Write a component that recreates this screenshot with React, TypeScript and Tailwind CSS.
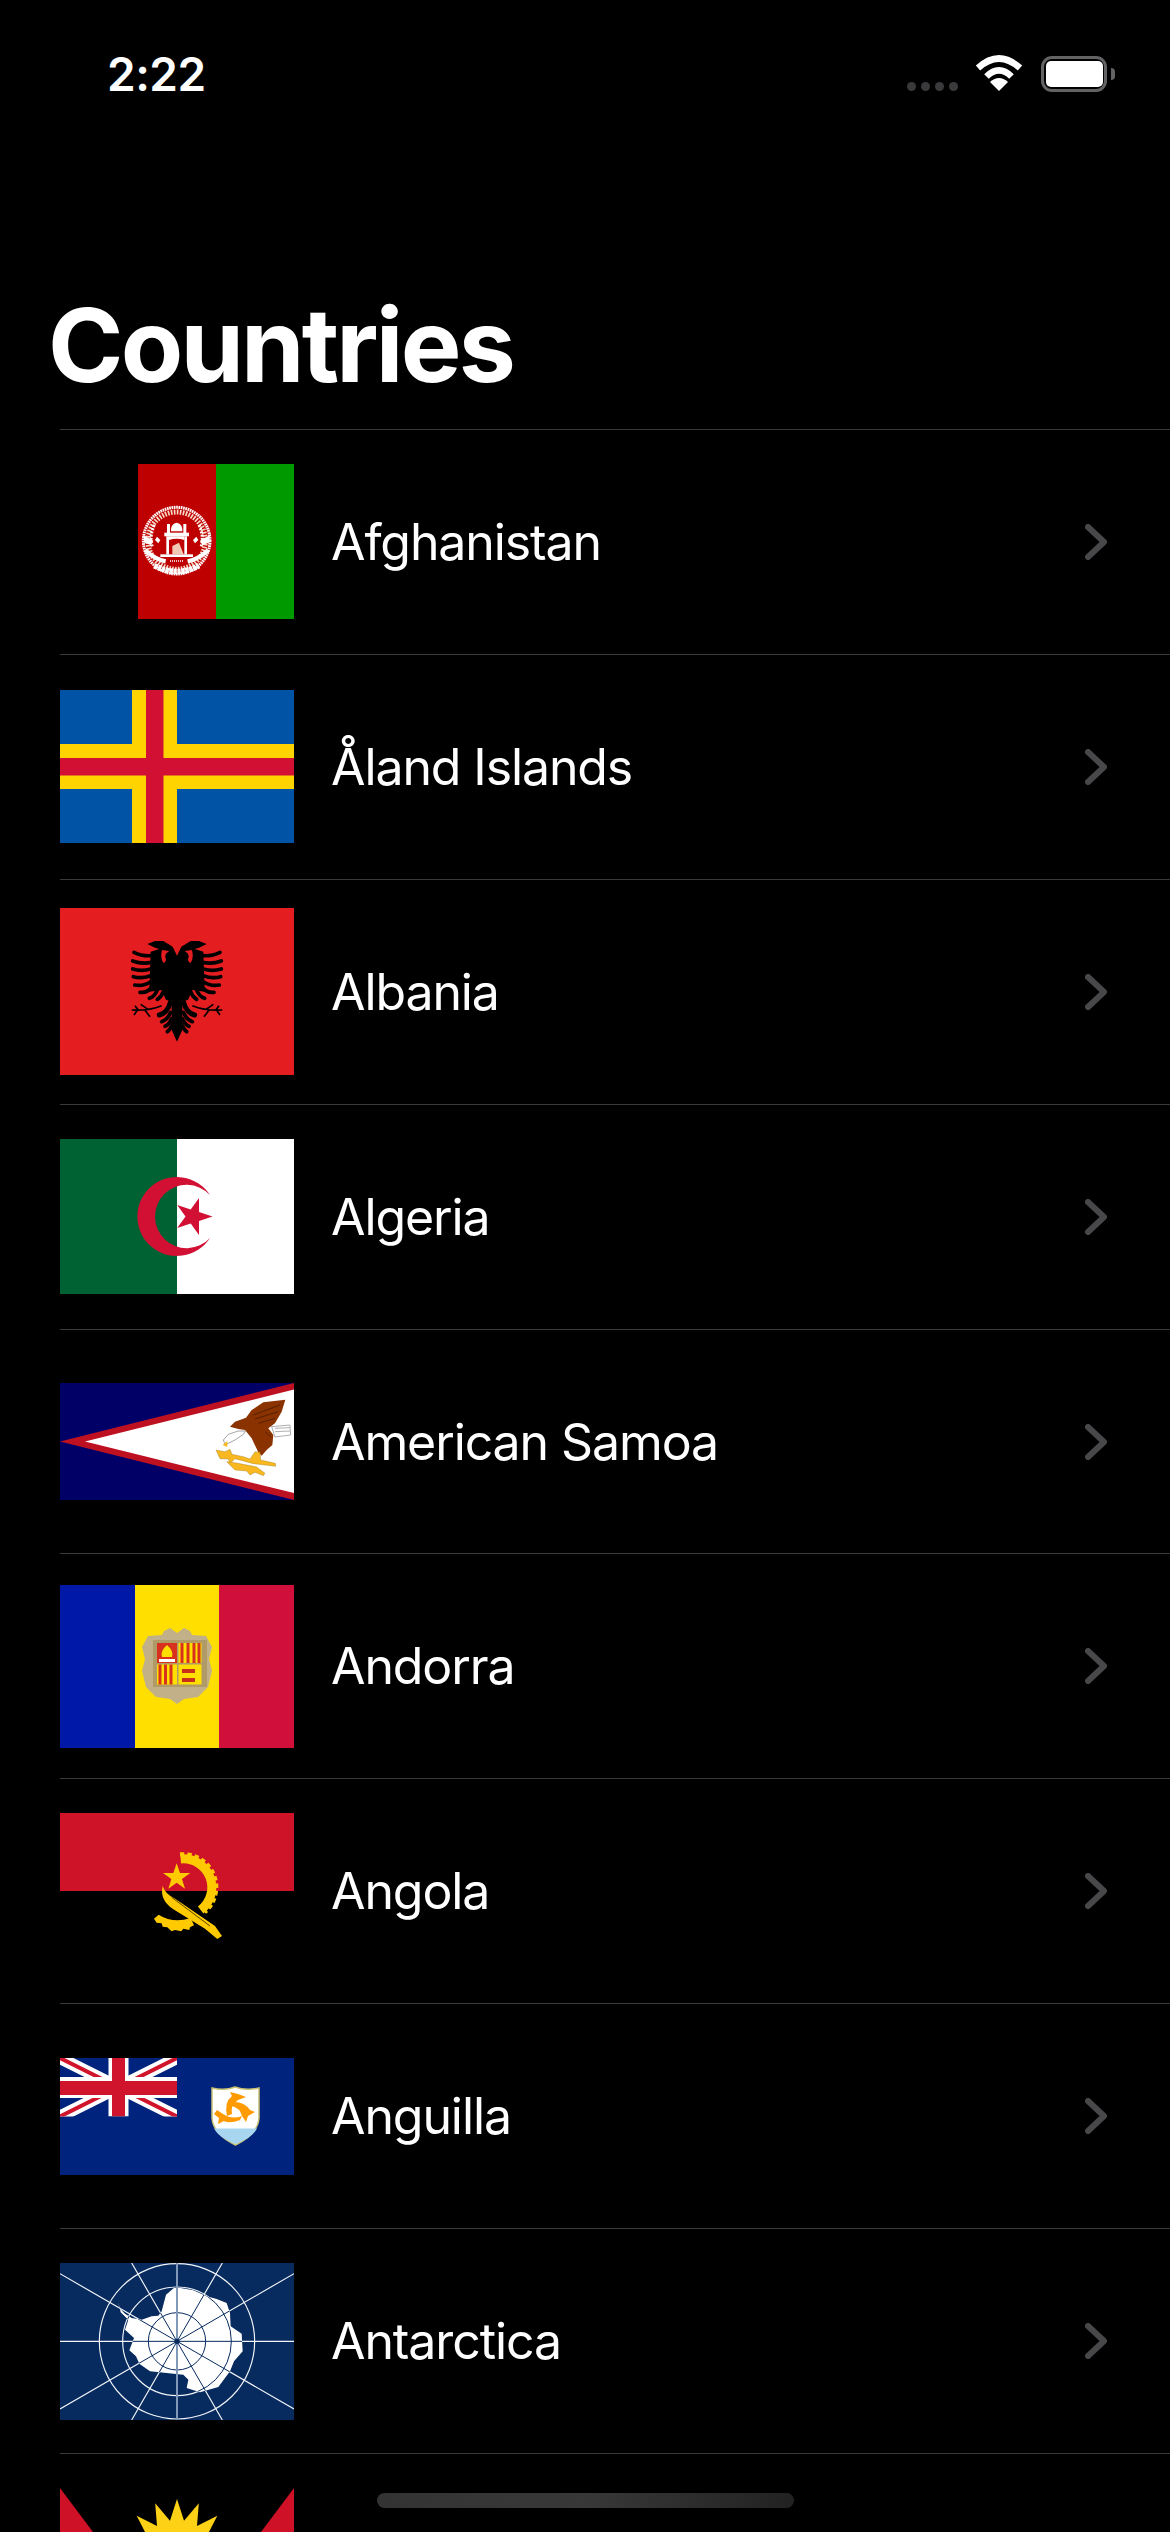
import React from 'react';

const Afghanistan = () => (
  <svg width="156" height="155" viewBox="0 0 156 155" className="block">
    <rect width="78" height="155" fill="#bf0000" />
    <rect x="78" width="78" height="155" fill="#009900" />
    <g transform="translate(-3 36) scale(.3333)">
      <circle cx="125" cy="122" r="100" fill="none" stroke="#fff" strokeWidth="9" strokeDasharray="5 2" />
      <circle cx="125" cy="122" r="86" fill="none" stroke="#f7d9c8" strokeWidth="15" strokeDasharray="5 4" />
      <path d="M58 75 Q42 110 52 140 M192 75 Q208 110 198 140" fill="none" stroke="#fff" strokeWidth="9" strokeDasharray="6 4" />
      <path d="M25 105 L55 122 L48 135 L28 128Z M225 105 L195 122 L202 135 L222 128Z" fill="#fff" />
      <path d="M30 150 Q60 178 92 184 M220 150 Q190 178 158 184" fill="none" stroke="#fff" strokeWidth="13" />
      <path d="M58 197 Q125 232 192 197" fill="none" stroke="#fff" strokeWidth="17" strokeDasharray="10 2" />
      <path d="M125 68 C138 70 143 82 142 94 L108 94 C107 82 112 70 125 68Z" fill="#fff" />
      <rect x="96" y="72" width="9" height="28" fill="#fff" />
      <rect x="145" y="72" width="9" height="28" fill="#fff" />
      <rect x="88" y="98" width="74" height="11" fill="#fff" />
      <rect x="94" y="109" width="8" height="54" fill="#fff" />
      <rect x="148" y="109" width="8" height="54" fill="#fff" />
      <path d="M102 109 H148 V120 Q125 112 102 120Z" fill="#fff" />
      <path d="M112 163 L112 138 L132 128 L146 163Z" fill="#f2c9b4" />
      <rect x="76" y="163" width="98" height="8" fill="#fff" />
      <path d="M105 183 H145" stroke="#fff" strokeWidth="5" strokeDasharray="3 3" />
      <path d="M66 110 L76 120 L70 130 L60 120Z M184 110 L174 120 L180 130 L190 120Z" fill="#fff" />
    </g>
  </svg>
);

const Aland = () => (
  <svg width="234" height="153" viewBox="0 0 234 153" className="block">
    <rect width="234" height="153" fill="#0053a5" />
    <rect x="72" width="45" height="153" fill="#ffd300" />
    <rect y="54" width="234" height="45" fill="#ffd300" />
    <rect x="86" width="17.5" height="153" fill="#d21034" />
    <rect y="68" width="234" height="17.5" fill="#d21034" />
  </svg>
);

const eagleHalf = (
  <g>
    <path d="M141 62 L128 35 L100 18 L75 18 L52 27 L75 38 L88 42 L62 50 L60 110 L58 170 L95 165 L108 195 L125 198 L125 285 L141 320 L141 62Z" fill="#000" />
    <path d="M96 45 Q90 68 100 84 Q112 80 106 66 Q104 56 118 48Z" fill="#e41e20" />
    <g fill="none" stroke="#000" strokeWidth="11" strokeLinecap="round">
      <path d="M65 62 Q35 64 12 52" />
      <path d="M65 82 Q35 88 8 78" />
      <path d="M62 102 Q35 110 8 102" />
      <path d="M62 122 Q35 132 10 125" />
      <path d="M62 140 Q40 155 14 150" />
      <path d="M66 155 Q52 175 30 172" />
      <path d="M84 160 Q75 185 58 190" />
      <path d="M100 170 Q95 185 82 193" />
      <path d="M122 200 Q112 235 88 240" strokeWidth="15" />
      <path d="M122 232 Q112 255 95 260" />
      <path d="M124 252 Q116 270 105 274" />
      <path d="M126 270 Q120 285 112 290" />
    </g>
    <path d="M95 212 Q55 228 5 225 M55 224 L32 208 M45 226 L60 245 M25 226 L15 212 M22 226 L12 240" fill="none" stroke="#000" strokeWidth="5" />
  </g>
);

const Albania = () => (
  <svg width="234" height="167" viewBox="0 0 234 167" className="block">
    <rect width="234" height="167" fill="#e41e20" />
    <g transform="translate(70 27) scale(.3333)">
      {eagleHalf}
      <g transform="translate(282 0) scale(-1 1)">{eagleHalf}</g>
    </g>
  </svg>
);

const Algeria = () => (
  <svg width="234" height="155" viewBox="0 0 234 155" className="block">
    <rect width="117" height="155" fill="#006233" />
    <rect x="117" width="117" height="155" fill="#fff" />
    <path d="M150 56 A39.500 39.500 0 1 0 150 99 A31.700 31.700 0 1 1 150 56Z" fill="#d21034" />
    <polygon
      points="152.5,77.5 139,82 139,96 130.7,84.6 117.2,89 125.5,77.5 117.2,66 130.7,70.4 139,59 139,73"
      fill="#d21034"
    />
  </svg>
);

const AmericanSamoa = () => (
  <svg width="234" height="117" viewBox="0 0 234 117" className="block">
    <rect width="234" height="117" fill="#000066" />
    <polygon points="0,58.5 234,0 234,117" fill="#bd1021" />
    <polygon points="25,58.5 234,6.5 234,110" fill="#fff" />
    <g transform="translate(150 12) scale(.3333)">
      <path d="M185 95 L240 90 L242 120 L195 126Z" fill="#fff" stroke="#888" strokeWidth="2" />
      <path d="M195 100 L240 98 M195 110 L240 108" stroke="#888" strokeWidth="2" />
      <path d="M60 95 L75 80 L108 68 L125 45 L160 22 L226 14 L215 50 L195 85 L175 100 L190 120 L187 150 L170 165 L155 182 L145 172 L125 130 L105 105 L85 102Z" fill="#8a3300" />
      <path d="M130 60 L210 30 M135 72 L205 50 M145 85 L195 70 M165 110 L182 125" stroke="#3d1500" strokeWidth="2" fill="none" />
      <path d="M40 135 L55 118 L85 108 L106 108 L100 118 L75 135 L55 145 L46 150Z" fill="#fff" stroke="#777" strokeWidth="2" />
      <path d="M38 150 L52 138 L52 156Z" fill="#f9b81f" />
      <path d="M18 165 L45 170 L60 163 L66 178 L100 185 L120 192 L135 170 L150 172 L152 195 L196 205 L197 214 L130 206 L75 191 L60 206 L55 192 L30 191Z" fill="#f9b81f" stroke="#8a6a10" strokeWidth="1" />
      <path d="M50 200 L80 204 L140 216 L165 235 L160 242 L135 232 L120 240 L110 228 L75 225Z" fill="#f9b81f" stroke="#8a6a10" strokeWidth="1" />
    </g>
  </svg>
);

const Andorra = () => (
  <svg width="234" height="163" viewBox="0 0 234 163" className="block">
    <rect width="75" height="163" fill="#0018a8" />
    <rect x="75" width="84" height="163" fill="#fedf00" />
    <rect x="159" width="75" height="163" fill="#d0103a" />
    <path d="M104 46 L110 43 L117 48 L124 43 L130 46 L132 50 L146 51 L152 62 L149 74 L152 86 L148 102 L138 112 L124 114 L117 119 L110 114 L96 112 L86 102 L82 86 L85 74 L82 62 L88 51 L102 50Z" fill="#c2b188" />
    <rect x="93" y="55" width="54" height="47" fill="#b09a68" />
    <rect x="97" y="58" width="20" height="20" fill="#d8321f" />
    <path d="M107 60 Q114 66 112 72 L102 72 Q100 66 107 60Z" fill="#fedf00" />
    <path d="M99 74 L115 74 L115 77 L99 77Z" fill="#fff" />
    <rect x="118.5" y="58" width="23" height="20" fill="#fedf00" />
    <path d="M122 58 v20 M128 58 v20 M134 58 v20 M139 58 v20" stroke="#d8321f" strokeWidth="3" />
    <rect x="97" y="79.5" width="20" height="20" fill="#fedf00" />
    <path d="M100 79.5 v20 M105.500 79.5 v20 M111 79.5 v20" stroke="#d8321f" strokeWidth="3" />
    <rect x="118.500" y="79.5" width="23" height="20" fill="#fedf00" />
    <path d="M122 84 h13 v4 h-13Z M122 93 h13 v4 h-13Z" fill="#c8301c" />
  </svg>
);

const Angola = () => (
  <svg width="234" height="156" viewBox="0 0 234 156" className="block">
    <rect width="234" height="78" fill="#ce1228" />
    <rect y="78" width="234" height="78" fill="#000" />
    <g transform="translate(70 31) scale(.3333)" fill="#ffcb00">
      <path d="M152 45 A85.500 85.500 0 0 1 212 198" fill="none" stroke="#ffcb00" strokeWidth="27" />
      <path d="M150 31 A99 99 0 0 1 224 205" fill="none" stroke="#ffcb00" strokeWidth="12" strokeDasharray="13 9" />
      <path d="M72 224 L86 212 Q130 240 182 222 L192 244 L180 250 L178 258 L160 254 L154 262 L135 258 L125 262 L112 250 L98 248 L95 238 L80 236Z" />
      <path d="M98 126 Q88 168 130 196 L225 254 L262 285 L276 276 L255 246 L132 162 Q106 150 98 126Z" />
      <path d="M125 160 L240 246" stroke="#000" strokeWidth="2" fill="none" />
      <polygon points="140,58 150,87 181,87 156,105 165,134 140,116 115,134 124,105 99,87 130,87" />
    </g>
  </svg>
);

const Anguilla = () => (
  <svg width="234" height="117" viewBox="0 0 234 117" className="block">
    <rect width="234" height="117" fill="#00247d" />
    <svg x="0" y="0" width="117" height="58.500" viewBox="0 0 117 58.5">
      <path d="M0 0 L117 58.5 M117 0 L0 58.500" stroke="#fff" strokeWidth="12" />
      <path d="M0 0 L117 58.5 M117 0 L0 58.500" stroke="#cf142b" strokeWidth="4" />
      <rect x="48.500" width="20" height="58.500" fill="#fff" />
      <rect y="19" width="117" height="21" fill="#fff" />
      <rect x="52" width="13" height="58.500" fill="#cf142b" />
      <rect y="23" width="117" height="14" fill="#cf142b" />
    </svg>
    <path d="M152 30 Q165 33 175 29 Q186 33 199 30 L199 60 Q198 76 175.500 87 Q153 76 152 60Z" fill="#fff" stroke="#c8c070" strokeWidth="1.500" />
    <path d="M154 70.500 L197 70.500 Q192 80 175.500 86 Q159 80 154 70.500Z" fill="#a8d5f0" />
    <g fill="#ff9a00">
      <path d="M178 36 L186 39 L178 42 Q170 48 172 56 L167 58 Q164 44 172 38 L170 34Z" />
      <path d="M172 44 Q184 43 190 52 L195 54 L188 58 L186 64 L182 58 Q180 50 172 48Z" />
      <path d="M157 52 L163 56 Q172 62 182 58 L180 62 Q170 66 164 63 L158 66 L159 60 L154 56Z" />
    </g>
  </svg>
);

const landPath =
  'M175 118 L178 135 L195 152 L215 165 L245 170 L275 160 L295 158 L305 145 L318 95 L345 72 L400 82 L440 100 L470 108 L500 120 L510 150 L512 190 L545 212 L548 265 L522 295 L510 325 L475 372 L420 388 L380 375 L385 350 L370 335 L320 330 L270 325 L238 302 L228 280 L208 262 L222 225 L195 200 L205 170 L182 148Z';

const Antarctica = () => (
  <svg width="234" height="157" viewBox="0 0 702 471" className="block">
    <defs>
      <clipPath id="land">
        <path d={landPath} />
      </clipPath>
    </defs>
    <rect width="702" height="471" fill="#072b5f" />
    <g fill="none" stroke="#f2f4f8" strokeWidth="3.500">
      <circle cx="351" cy="235" r="233" />
      <circle cx="351" cy="235" r="163" />
      <circle cx="351" cy="235" r="86" />
      <path d="M0 235 H702 M0 32 L702 438 M702 32 L0 438 M215 0 L487 471 M487 0 L215 471" />
    </g>
    <path d={landPath} fill="#fff" />
    <g clipPath="url(#land)" fill="none" stroke="#072b5f" strokeWidth="3">
      <circle cx="351" cy="235" r="163" />
      <circle cx="351" cy="235" r="86" />
      <path d="M0 235 H702 M0 32 L702 438 M702 32 L0 438 M215 0 L487 471 M487 0 L215 471" />
    </g>
    <rect x="348" width="6" height="471" fill="#8298b8" />
    <circle cx="351" cy="235" r="8" fill="#072b5f" />
  </svg>
);

const sunPoints = Array.from({ length: 32 }, (_, i) => {
  const a = (i * Math.PI) / 16;
  const r = i % 2 === 0 ? 57 : 36;
  return `${117 + r * Math.sin(a)},${68 - r * Math.cos(a)}`;
}).join(' ');

const Antigua = () => (
  <svg width="234" height="156" viewBox="0 0 234 156" className="block">
    <rect width="234" height="156" fill="#000" />
    <polygon points="0,0 117,156 0,156" fill="#ce1126" />
    <polygon points="234,0 117,156 234,156" fill="#ce1126" />
    <polygon points={sunPoints} fill="#fcd116" />
  </svg>
);

// the last row's label sits below the fold, only the top of its flag shows
const countries: { name?: string; flag: React.ReactNode }[] = [
  { name: 'Afghanistan', flag: <Afghanistan /> },
  { name: 'Åland Islands', flag: <Aland /> },
  { name: 'Albania', flag: <Albania /> },
  { name: 'Algeria', flag: <Algeria /> },
  { name: 'American Samoa', flag: <AmericanSamoa /> },
  { name: 'Andorra', flag: <Andorra /> },
  { name: 'Angola', flag: <Angola /> },
  { name: 'Anguilla', flag: <Anguilla /> },
  { name: 'Antarctica', flag: <Antarctica /> },
  { flag: <Antigua /> },
];

const Chevron = () => (
  <svg width="22" height="36" viewBox="0 0 22 36" fill="none" className="block">
    <path d="M3 3 L19 18 L3 33" stroke="#48484a" strokeWidth="6" strokeLinecap="round" strokeLinejoin="round" />
  </svg>
);

const Wifi = () => (
  <svg width="48" height="36" viewBox="0 0 48 36" fill="none" className="block">
    <path d="M3 13 Q24 -6 45 13" stroke="#fff" strokeWidth="6.5" />
    <path d="M11.500 21.500 Q24 9 36.500 21.500" stroke="#fff" strokeWidth="6.5" />
    <path d="M24 36 L15 27 Q24 19 33 27Z" fill="#fff" />
  </svg>
);

export default function App() {
  return (
    <div className="relative h-[2532px] w-[1170px] overflow-hidden bg-black font-['Inter'] text-white">
      {/* status bar */}
      <div className="flex h-[148px] items-start justify-between pl-[107px] pr-[55px] pt-[44px]">
        <span className="mt-[2px] text-[46px] leading-[56px] font-semibold tracking-[-0.5px]">2:22</span>
        <div className="flex items-start pt-[11px]">
          <div className="mr-[17px] mt-[27px] flex gap-[5px]">
            <div className="h-[9px] w-[9px] rounded-full bg-[#3a3a3c]" />
            <div className="h-[9px] w-[9px] rounded-full bg-[#3a3a3c]" />
            <div className="h-[9px] w-[9px] rounded-full bg-[#3a3a3c]" />
            <div className="h-[9px] w-[9px] rounded-full bg-[#3a3a3c]" />
          </div>
          <Wifi />
          <div className="ml-[18px] mt-[1px] flex items-center">
            <div className="h-[36px] w-[66px] rounded-[11px] border-[3.5px] border-[#636366] px-[1.5px] py-[2px]">
              <div className="h-full w-full rounded-[5px] bg-white" />
            </div>
            <div className="ml-[4px] h-[12px] w-[4px] rounded-r-full bg-[#636366]" />
          </div>
        </div>
      </div>

      {/* large title */}
      <h1 className="flex h-[281px] items-start pl-[48px] pt-[137px] text-[102px] leading-[120px] font-bold tracking-[-2.8px]">
        Countries
      </h1>

      <div className="pl-[60px]">
        {countries.map((c, i) => (
          <div key={i} className="flex h-[224.9px] items-center border-t border-[#3a3a3c]">
            <div className="flex w-[234px] justify-end">{c.flag}</div>
            {c.name && (
              <>
                <span className="ml-[37px] text-[50px] leading-[60px] tracking-[-1.1px]">{c.name}</span>
                <div className="ml-auto mr-[63px]">
                  <Chevron />
                </div>
              </>
            )}
          </div>
        ))}
      </div>

      {/* home indicator */}
      <div className="absolute left-[377px] top-[2493px] h-[15px] w-[417px] rounded-full bg-gradient-to-r from-[#333333] via-[#383838] to-[#222222]" />
    </div>
  );
}
